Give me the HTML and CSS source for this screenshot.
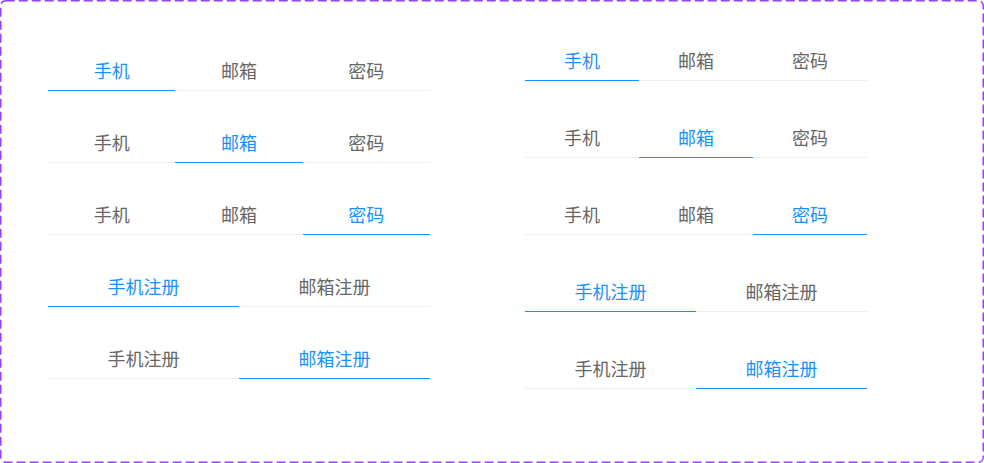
FILE: index.html
```html
<!DOCTYPE html>
<html lang="zh-CN">
<head>
    <meta charset="UTF-8">
    <title>Tabs</title>
    <link rel="stylesheet" href="styles.css">
</head>
<body>

<div class="board">
    <svg class="frame" width="984" height="463" viewBox="0 0 984 463">
        <rect x="0.75" y="0.75" width="982.5" height="461.5" rx="5" ry="5"
              fill="none" stroke="#9442ff" stroke-width="1.5" stroke-dasharray="9 4"/>
    </svg>

    <div class="col col-left">
        <div class="tabs">
            <div class="tab active">手机</div>
            <div class="tab">邮箱</div>
            <div class="tab">密码</div>
        </div>
        <div class="tabs">
            <div class="tab">手机</div>
            <div class="tab active">邮箱</div>
            <div class="tab">密码</div>
        </div>
        <div class="tabs">
            <div class="tab">手机</div>
            <div class="tab">邮箱</div>
            <div class="tab active">密码</div>
        </div>
        <div class="tabs">
            <div class="tab active">手机注册</div>
            <div class="tab">邮箱注册</div>
        </div>
        <div class="tabs">
            <div class="tab">手机注册</div>
            <div class="tab active">邮箱注册</div>
        </div>
    </div>

    <div class="col col-right">
        <div class="tabs">
            <div class="tab active">手机</div>
            <div class="tab">邮箱</div>
            <div class="tab">密码</div>
        </div>
        <div class="tabs">
            <div class="tab">手机</div>
            <div class="tab active">邮箱</div>
            <div class="tab">密码</div>
        </div>
        <div class="tabs">
            <div class="tab">手机</div>
            <div class="tab">邮箱</div>
            <div class="tab active">密码</div>
        </div>
        <div class="tabs">
            <div class="tab active">手机注册</div>
            <div class="tab">邮箱注册</div>
        </div>
        <div class="tabs">
            <div class="tab">手机注册</div>
            <div class="tab active">邮箱注册</div>
        </div>
    </div>

</div>

</body>
</html>
```

FILE: styles.css
```css
body {
    margin: 0;
    background: #fff;
    font-family: "Noto Sans CJK SC", "Noto Sans", sans-serif;
}

.board {
    position: relative;
    box-sizing: border-box;
    width: 984px;
    height: 463px;
    display: flex;
    align-items: flex-start;
    gap: 95px;
    padding-left: 48px;
}

.frame {
    position: absolute;
    left: 0;
    top: 0;
    pointer-events: none;
}

.col {
    display: flex;
    flex-direction: column;
}

.col-left {
    width: 382px;
    padding-top: 51px;
    gap: 32px;
}

.col-right {
    width: 342px;
    padding-top: 41px;
    gap: 37px;
}

.tabs {
    display: flex;
    border-bottom: 1px solid #f0f0f0;
}

.tab {
    flex: 1;
    height: 40px;
    display: flex;
    align-items: center;
    justify-content: center;
    font-size: 18px;
    line-height: 1;
    padding-bottom: 1px;
    box-sizing: border-box;
    color: #666;
    margin-bottom: -1px;
    border-bottom: 1px solid transparent;
}

.tab.active {
    color: #1890ff;
    border-bottom-color: #1890ff;
}
```
